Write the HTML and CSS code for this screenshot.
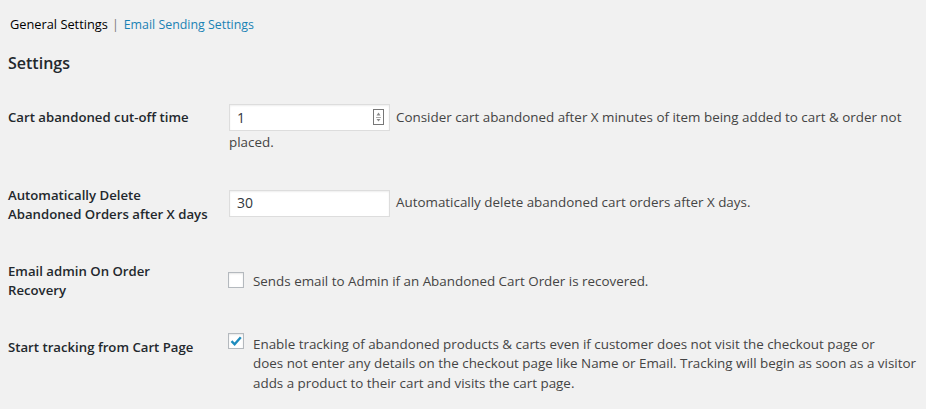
FILE: index.html
```html
<!DOCTYPE html>
<html>
<head>
<meta charset="utf-8">
<link rel="stylesheet" href="styles.css">
</head>
<body>
<div class="wrap">
  <nav class="tabs">
    <a class="current" href="#">General Settings</a><span class="sep">|</span><a href="#">Email Sending Settings</a>
  </nav>
  <h2 class="title">Settings</h2>
  <div class="form">
    <div class="row r1">
      <div class="label">Cart abandoned cut-off time</div>
      <div class="field">
        <span class="input num"><span class="val">1</span>
          <svg class="spin" width="11" height="16" viewBox="0 0 11 16"><rect x="0.5" y="0.5" width="10" height="15" fill="#fff" stroke="#777"/><path d="M5.5 3.5 L7.5 6.5 H3.5 Z" fill="#888"/><rect x="3" y="8" width="5" height="1" fill="#aaa"/><path d="M3.5 10 H7.5 L5.5 12.5 Z" fill="#888"/></svg>
        </span><span class="desc inline">Consider cart abandoned after X minutes of item being added to cart &amp; order not</span>
        <div class="desc cont">placed.</div>
      </div>
    </div>
    <div class="row r2">
      <div class="label">Automatically Delete<br>Abandoned Orders after X days</div>
      <div class="field">
        <span class="input"><span class="val">30</span></span><span class="desc inline">Automatically delete abandoned cart orders after X days.</span>
      </div>
    </div>
    <div class="row r3">
      <div class="label">Email admin On Order<br>Recovery</div>
      <div class="field check">
        <span class="box"></span>
        <span class="desc">Sends email to Admin if an Abandoned Cart Order is recovered.</span>
      </div>
    </div>
    <div class="row r4">
      <div class="label">Start tracking from Cart Page</div>
      <div class="field check">
        <span class="box checked"><svg width="14" height="14" viewBox="0 0 14 14"><path d="M2.5 7.2 L5.6 10.3 L11.8 3.2" fill="none" stroke="#1e8cbe" stroke-width="2.4"/></svg></span>
        <span class="desc para">Enable tracking of abandoned products &amp; carts even if customer does not visit the checkout page or<br>does not enter any details on the checkout page like Name or Email. Tracking will begin as soon as a visitor<br>adds a product to their cart and visits the cart page.</span>
      </div>
    </div>
  </div>
</div>
</body>
</html>
```
FILE: styles.css
```css
html, body {
  margin: 0;
  padding: 0;
  background: #f1f1f1;
}
body {
  font-family: "Open Sans", "Noto Sans", sans-serif;
  font-size: 13.4px;
  line-height: 19.5px;
  color: #23282d;
}
.wrap {
  padding: 14px 0 0 8px;
  width: 910px;
}
.tabs {
  padding-left: 2px;
  height: 20px;
  line-height: 20px;
}
.tabs a {
  color: #1a82b4;
  text-decoration: none;
  font-size: 12.4px;
}
.tabs a.current {
  color: #000;
  font-weight: 400;
  font-size: 12.8px;
}
.tabs .sep {
  color: #777;
  font-size: 12.4px;
  margin: 0 5px 0 4px;
}
.title {
  margin: 17px 0 0 0;
  font-size: 16px;
  line-height: 24px;
  font-weight: 600;
  color: #23282d;
}
.form {
  margin-top: 29px;
}
.row {
  display: grid;
  grid-template-columns: 221px 1fr;
}
.label {
  font-weight: 600;
  font-size: 13.2px;
  white-space: nowrap;
}
.input {
  display: inline-flex;
  align-items: center;
  justify-content: space-between;
  box-sizing: border-box;
  width: 161px;
  height: 27px;
  background: #fff;
  border: 1px solid #ddd;
  box-shadow: inset 0 1px 2px rgba(0,0,0,.07);
  padding: 0 5px 0 7px;
  vertical-align: middle;
  color: #32373c;
  font-size: 14px;
}
.spin {
  display: block;
  margin-top: -1px;
}
.desc.inline {
  margin-left: 6px;
  vertical-align: middle;
}
.desc {
  color: #444;
}
.r1 .label { padding-top: 4px; }
.r1 .field { padding-top: 0; }
.r1 .desc.cont { margin-top: 2px; }
.r2 { margin-top: 32px; }
.r2 .label { padding-top: 1px; }
.r2 .field { padding-top: 5px; }
.r3 { margin-top: 37px; }
.check {
  display: flex;
  align-items: flex-start;
}
.box {
  flex: none;
  box-sizing: border-box;
  width: 16px;
  height: 16px;
  border: 1px solid #b4b9be;
  background: #fff;
  box-shadow: inset 0 1px 2px rgba(0,0,0,.1);
  margin: 0 9px 0 -1px;
  display: flex;
  align-items: center;
  justify-content: center;
}
.r3 .field { padding-top: 10px; }
.r3 .box { margin-top: 0; }
.r4 { margin-top: 32px; }
.r4 .label { padding-top: 5px; }
.r4 .field { padding-top: 0; }
.r4 .box { margin-top: 0; }
.para {
  white-space: nowrap;
  margin-top: 2px;
}
```
